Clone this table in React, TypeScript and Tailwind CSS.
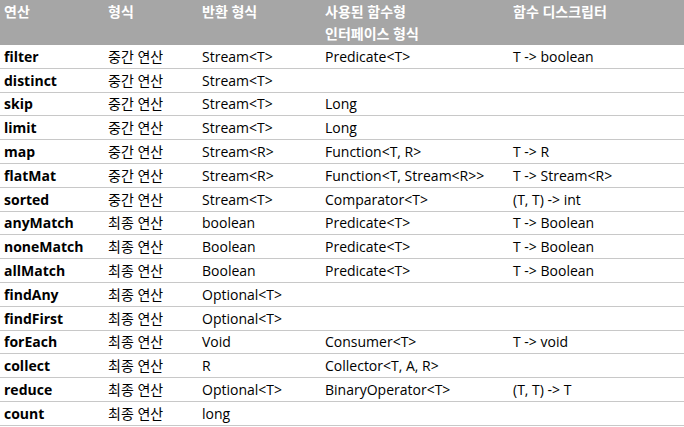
import React from 'react';

type Row = [string, string, string, string, string];

const rows: Row[] = [
  ['filter', '중간 연산', 'Stream<T>', 'Predicate<T>', 'T -> boolean'],
  ['distinct', '중간 연산', 'Stream<T>', '', ''],
  ['skip', '중간 연산', 'Stream<T>', 'Long', ''],
  ['limit', '중간 연산', 'Stream<T>', 'Long', ''],
  ['map', '중간 연산', 'Stream<R>', 'Function<T, R>', 'T -> R'],
  ['flatMat', '중간 연산', 'Stream<R>', 'Function<T, Stream<R>>', 'T -> Stream<R>'],
  ['sorted', '중간 연산', 'Stream<T>', 'Comparator<T>', '(T, T) -> int'],
  ['anyMatch', '최종 연산', 'boolean', 'Predicate<T>', 'T -> Boolean'],
  ['noneMatch', '최종 연산', 'Boolean', 'Predicate<T>', 'T -> Boolean'],
  ['allMatch', '최종 연산', 'Boolean', 'Predicate<T>', 'T -> Boolean'],
  ['findAny', '최종 연산', 'Optional<T>', '', ''],
  ['findFirst', '최종 연산', 'Optional<T>', '', ''],
  ['forEach', '최종 연산', 'Void', 'Consumer<T>', 'T -> void'],
  ['collect', '최종 연산', 'R', 'Collector<T, A, R>', ''],
  ['reduce', '최종 연산', 'Optional<T>', 'BinaryOperator<T>', '(T, T) -> T'],
  ['count', '최종 연산', 'long', '', ''],
];

const cols = 'grid grid-cols-[104px_94px_123px_188px_1fr]';

const App: React.FC = () => {
  return (
    <div
      className="w-[684px] h-[427px] bg-white text-[14px] text-black overflow-hidden"
      style={{ fontFamily: '"Open Sans", "Noto Sans CJK KR", sans-serif' }}
    >
      <div className={`${cols} h-[45px] bg-[#a6a6a6] text-white font-bold`}>
        <div className="pl-1 pt-[1px]">연산</div>
        <div className="pl-1 pt-[1px]">형식</div>
        <div className="pl-1 pt-[1px]">반환 형식</div>
        <div className="pl-1 pt-[1px] leading-[22px]">
          사용된 함수형
          <br />
          인터페이스 형식
        </div>
        <div className="pl-1 pt-[1px]">함수 디스크립터</div>
      </div>
      {rows.map((r) => (
        <div key={r[0]} className={`${cols} h-[23.8px] items-center border-b border-[#c8c8c8]`}>
          <div className="pl-1 font-bold">{r[0]}</div>
          <div className="pl-1">{r[1]}</div>
          <div className="pl-1">{r[2]}</div>
          <div className="pl-1">{r[3]}</div>
          <div className="pl-1">{r[4]}</div>
        </div>
      ))}
    </div>
  );
};

export default App;
